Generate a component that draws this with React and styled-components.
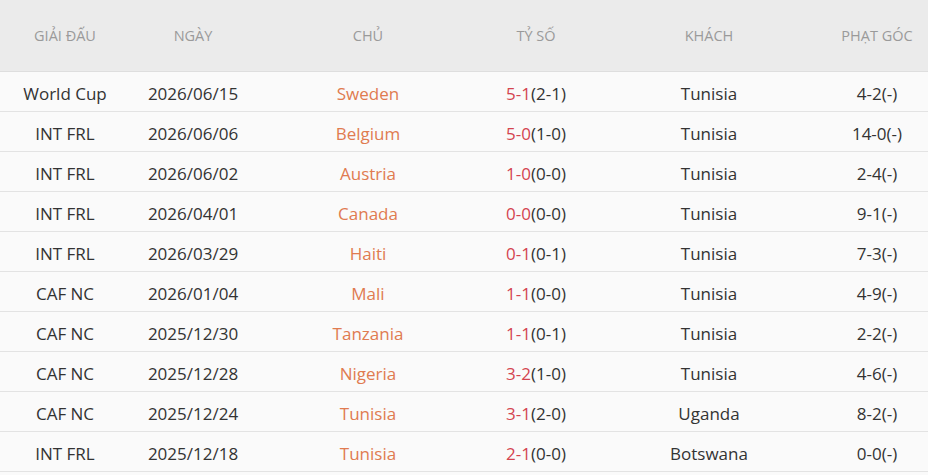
import React from "react";
import styled, { createGlobalStyle } from "styled-components";

const Global = createGlobalStyle`
  html, body { margin: 0; padding: 0; background: #fafafa; }
  body { font-family: "Open Sans", "Noto Sans", sans-serif; }
`;

const cols = "130px 126px 224px 112px 234px 102px";

const Table = styled.div`
  width: 928px;
  display: flex;
  flex-direction: column;
`;

const HeadRow = styled.div`
  display: grid;
  grid-template-columns: ${cols};
  height: 72px;
  align-items: center;
  background: #ebebeb;
  border-bottom: 1px solid #dedede;
  box-sizing: border-box;
`;

const HeadCell = styled.div`
  text-align: center;
  font-size: 14.5px;
  color: #9a9a9a;
  text-transform: uppercase;
  white-space: nowrap;
`;

const Row = styled.div`
  display: grid;
  grid-template-columns: ${cols};
  height: 40px;
  padding-top: 3px;
  align-items: center;
  background: #fafafa;
  border-bottom: 1px solid #e3e3e3;
  box-sizing: border-box;
`;

const Cell = styled.div`
  text-align: center;
  font-size: 17px;
  color: ${(p) => (p.$home ? "#e07b50" : "#333333")};
  white-space: nowrap;
`;

const Score = styled.span`
  color: #d4444f;
`;

const data = [
  ["World Cup", "2026/06/15", "Sweden", "5-1", "(2-1)", "Tunisia", "4-2(-)"],
  ["INT FRL", "2026/06/06", "Belgium", "5-0", "(1-0)", "Tunisia", "14-0(-)"],
  ["INT FRL", "2026/06/02", "Austria", "1-0", "(0-0)", "Tunisia", "2-4(-)"],
  ["INT FRL", "2026/04/01", "Canada", "0-0", "(0-0)", "Tunisia", "9-1(-)"],
  ["INT FRL", "2026/03/29", "Haiti", "0-1", "(0-1)", "Tunisia", "7-3(-)"],
  ["CAF NC", "2026/01/04", "Mali", "1-1", "(0-0)", "Tunisia", "4-9(-)"],
  ["CAF NC", "2025/12/30", "Tanzania", "1-1", "(0-1)", "Tunisia", "2-2(-)"],
  ["CAF NC", "2025/12/28", "Nigeria", "3-2", "(1-0)", "Tunisia", "4-6(-)"],
  ["CAF NC", "2025/12/24", "Tunisia", "3-1", "(2-0)", "Uganda", "8-2(-)"],
  ["INT FRL", "2025/12/18", "Tunisia", "2-1", "(0-0)", "Botswana", "0-0(-)"],
];

export default function App() {
  return (
    <>
      <Global />
      <Table>
        <HeadRow>
          <HeadCell>Giải đấu</HeadCell>
          <HeadCell>Ngày</HeadCell>
          <HeadCell>Chủ</HeadCell>
          <HeadCell>Tỷ số</HeadCell>
          <HeadCell>Khách</HeadCell>
          <HeadCell>Phạt góc</HeadCell>
        </HeadRow>
        {data.map((r, i) => (
          <Row key={i}>
            <Cell>{r[0]}</Cell>
            <Cell>{r[1]}</Cell>
            <Cell $home>{r[2]}</Cell>
            <Cell>
              <Score>{r[3]}</Score>
              {r[4]}
            </Cell>
            <Cell>{r[5]}</Cell>
            <Cell>{r[6]}</Cell>
          </Row>
        ))}
      </Table>
    </>
  );
}
